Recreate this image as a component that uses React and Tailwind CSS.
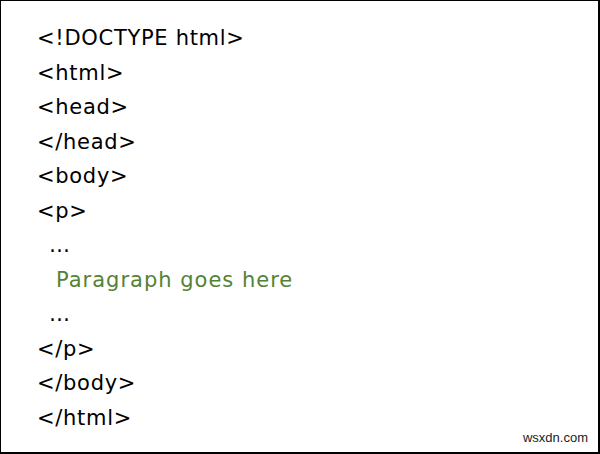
import React from 'react';

const lines = [
  { text: '<!DOCTYPE html>' },
  { text: '<html>' },
  { text: '<head>' },
  { text: '</head>' },
  { text: '<body>' },
  { text: '<p>' },
  { text: '…', indent: 'pl-[12px]' },
  { text: 'Paragraph goes here', indent: 'pl-[19px]', green: true },
  { text: '…', indent: 'pl-[12px]' },
  { text: '</p>' },
  { text: '</body>' },
  { text: '</html>' },
];

export default function App() {
  return (
    <div className="w-[600px] h-[454px] bg-white border-t border-l border-r-2 border-b-2 border-black relative font-['DejaVu_Sans',sans-serif]">
      <div className="pt-[20px] pl-[36px] flex flex-col">
        {lines.map((l, i) => (
          <div
            key={i}
            className={`h-[34.5px] leading-[34.5px] text-[21px] whitespace-pre ${l.indent || ''} ${l.green ? 'text-[#548235] tracking-[1px]' : 'text-black tracking-[0.7px]'}`}
          >
            {l.text}
          </div>
        ))}
      </div>
      <div className="absolute right-[10px] bottom-[5px] text-[13px] text-[#222] font-['Liberation_Sans',sans-serif]">
        wsxdn.com
      </div>
    </div>
  );
}
